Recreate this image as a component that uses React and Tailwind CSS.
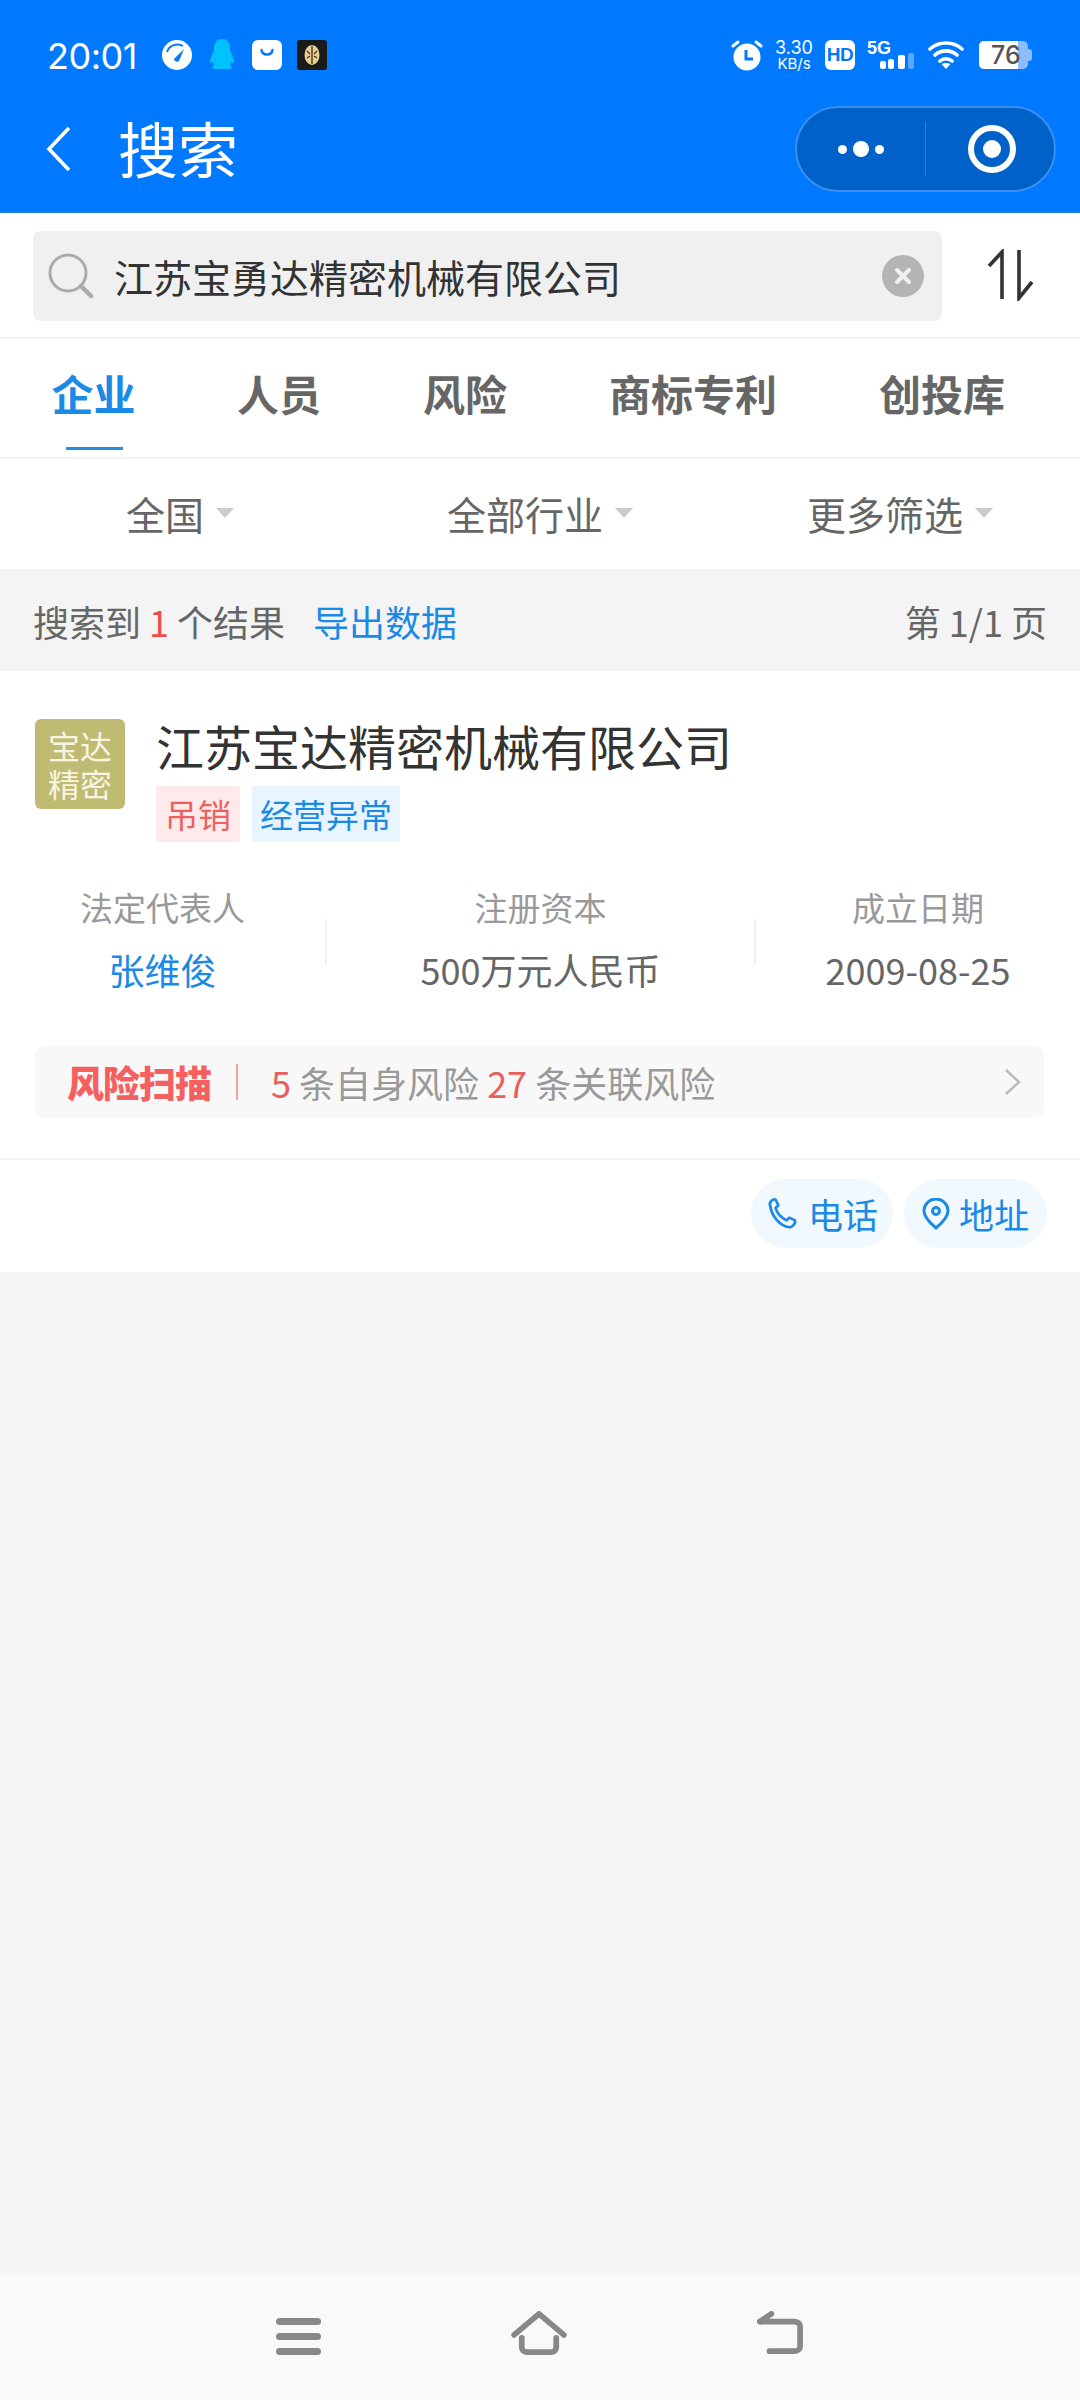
const cjk = "font-['Noto_Sans_CJK_SC','Noto_Sans',sans-serif]";

function StatusLeft() {
  return (
    <div className="flex items-center">
      <span className="font-['Inter',sans-serif] text-[36px] leading-none text-white w-[115px] ml-[47px] mt-[2px] tracking-[-0.5px]">20:01</span>
      <svg width="30" height="30" viewBox="0 0 30 30" className="shrink-0">
        <circle cx="15" cy="15" r="15" fill="#fff" />
        <path d="M5 12a11 11 0 0 1 16-6" fill="none" stroke="#0079fe" strokeWidth="2" />
        <path d="M12 19l10-10-5 12a3 3 0 0 1-5-2z" fill="#0079fe" />
      </svg>
      <svg width="26" height="31" viewBox="0 0 26 31" className="ml-[17px] shrink-0">
        <path d="M13 0c6 0 8 5 8 10 0 3 3 7 4 12 .4 2-1 2-3 1l-1 3c2 1 2 4 0 4H5c-2 0-2-3 0-4l-1-3c-2 1-3.400 1-3-1 1-5 4-9 4-12C5 5 7 0 13 0z" fill="#00c2ff" />
      </svg>
      <div className="ml-[17px] w-[30px] h-[30px] pt-[7px] rounded-[6px] bg-white flex justify-center shrink-0">
        <svg width="16" height="12" viewBox="0 0 16 12">
          <path d="M2.500 3c1 6 10 6 11 0" fill="none" stroke="#0079fe" strokeWidth="2.400" strokeLinecap="round" />
        </svg>
      </div>
      <div className="ml-[15px] w-[30px] h-[30px] rounded-[3px] bg-[#1c1a18] flex items-center justify-center shrink-0">
        <svg width="16" height="22" viewBox="0 0 16 22">
          <ellipse cx="8" cy="11" rx="7.500" ry="10" fill="#e8cf95" />
          <path d="M8 2v18M3 7l3 3M13 7l-3 3M3 14l3-2M13 14l-3-2" stroke="#4a3518" strokeWidth="1.400" />
        </svg>
      </div>
    </div>
  );
}

function StatusRight() {
  return (
    <div className="flex items-center mr-[48px]">
      <svg width="32" height="32" viewBox="0 0 32 32" className="shrink-0">
        <circle cx="16" cy="18" r="13.500" fill="#fff" />
        <path d="M2 7l5-4M30 7l-5-4" stroke="#fff" strokeWidth="3" strokeLinecap="round" />
        <path d="M15 11v9h7" fill="none" stroke="#0079fe" strokeWidth="3" />
      </svg>
      <div className="ml-[10px] w-[42px] flex flex-col items-center font-['Inter',sans-serif] text-white leading-none">
        <span className="text-[18px] h-[17px]">3.30</span>
        <span className="text-[15px] h-[15px]">KB/s</span>
      </div>
      <div className="ml-[10px] w-[30px] h-[30px] rounded-[6px] bg-white flex items-center justify-center font-['Liberation_Sans',sans-serif] font-bold text-[19px] tracking-[-0.5px] leading-none text-[#0079fe] shrink-0">HD</div>
      <div className="relative ml-[12px] w-[48px] h-[32px] shrink-0">
        <span className="absolute left-0 top-0 font-['Liberation_Sans',sans-serif] font-bold text-[18px] leading-none text-white">5G</span>
        <svg width="48" height="32" viewBox="0 0 48 32" className="absolute left-0 top-0">
          <rect x="13" y="22" width="6" height="8" rx="2" fill="#fff" />
          <rect x="21" y="20" width="6" height="10" rx="2" fill="#fff" />
          <rect x="31" y="16" width="7" height="14" rx="2" fill="#fff" />
          <rect x="41" y="14" width="6" height="16" rx="2" fill="#fff" opacity="0.35" />
        </svg>
      </div>
      <svg width="36" height="30" viewBox="0 0 36 30" className="ml-[13px] shrink-0">
        <path d="M2 9c9-8 23-8 32 0M7 15c6-5.500 16-5.500 22 0M12 21c3.500-3 8.500-3 12 0" fill="none" stroke="#fff" strokeWidth="3.600" strokeLinecap="round" />
        <path d="M18 29l-4.500-5c2.500-1.500 6.500-1.500 9 0z" fill="#fff" />
      </svg>
      <div className="ml-[15px] flex items-center shrink-0">
        <div className="relative w-[49px] h-[28px] rounded-[5px] bg-[#8cbcfb] overflow-hidden">
          <div className="absolute left-0 top-0 bottom-0 w-[39px] bg-white" />
          <span className="absolute left-[12px] top-[1px] font-['Inter',sans-serif] font-medium text-[25px] leading-[26px] text-[#555]">76</span>
        </div>
        <div className="w-[4px] h-[12px] rounded-r-[3px] bg-[#8cbcfb]" />
      </div>
    </div>
  );
}

function Header() {
  return (
    <div className="h-[213px] bg-[#0079fe] border-b-[2px] border-[#1a7ad6] flex flex-col shrink-0">
      <div className="h-[39px]" />
      <div className="h-[31px] flex items-center justify-between">
        <StatusLeft />
        <StatusRight />
      </div>
      <div className="flex items-center justify-between mt-[36px]">
        <div className="flex items-center">
          <svg width="28" height="46" viewBox="0 0 28 46" className="ml-[45px]">
            <path d="M24 2L4 23l20 21" fill="none" stroke="#fff" strokeWidth="3.600" />
          </svg>
          <span className={`${cjk} ml-[45px] -mt-[4px] text-[60px] leading-[80px] text-white`}>搜索</span>
        </div>
        <div className="w-[261px] h-[86px] mr-[24px] rounded-full bg-[#0062c8] border-2 border-[#3c8df0] flex items-center">
          <div className="w-[128px] flex items-center justify-center gap-[6px]">
            <span className="w-[9px] h-[9px] rounded-full bg-white" />
            <span className="w-[16px] h-[16px] rounded-full bg-white" />
            <span className="w-[9px] h-[9px] rounded-full bg-white" />
          </div>
          <div className="w-[1px] h-[54px] bg-[#2a7fe0]" />
          <div className="flex-1 flex items-center justify-center pl-[4px]">
            <div className="w-[48px] h-[48px] rounded-full border-[6px] border-white flex items-center justify-center">
              <span className="w-[18px] h-[18px] rounded-full bg-white" />
            </div>
          </div>
        </div>
      </div>
    </div>
  );
}

function SearchRow() {
  return (
    <div className="h-[126px] bg-white border-b-[2px] border-[#f2f2f2] flex items-center pl-[33px] shrink-0">
      <div className="w-[909px] h-[90px] mt-[2px] rounded-[8px] bg-[#f0f0f0] flex items-center">
        <svg width="48" height="46" viewBox="0 0 48 46" className="ml-[14px] shrink-0">
          <circle cx="21" cy="20" r="18" fill="none" stroke="#aaa" strokeWidth="3" />
          <path d="M34 33l10 10" stroke="#aaa" strokeWidth="4.500" strokeLinecap="round" />
        </svg>
        <span className={`${cjk} ml-[19px] text-[39px] leading-none text-[#333] flex-1`}>江苏宝勇达精密机械有限公司</span>
        <div className="w-[42px] h-[42px] rounded-full bg-[#b4b4b4] flex items-center justify-center mr-[18px] shrink-0">
          <svg width="20" height="20" viewBox="0 0 20 20">
            <path d="M4 4l12 12M16 4L4 16" stroke="#f0f0f0" strokeWidth="4" strokeLinecap="round" />
          </svg>
        </div>
      </div>
      <svg width="50" height="52" viewBox="0 0 50 52" className="ml-[45px] shrink-0">
        <path d="M15 50V3L2 17M32 1v48l13-16" fill="none" stroke="#333" strokeWidth="3.600" />
      </svg>
    </div>
  );
}

function Tabs() {
  const tabs = [
    { t: "企业", w: "w-[187px]", on: true },
    { t: "人员", w: "w-[184px]" },
    { t: "风险", w: "w-[188px]" },
    { t: "商标专利", w: "w-[268px]" },
    { t: "创投库", w: "w-[230px]" },
  ];
  return (
    <div className="h-[120px] bg-white border-b-[2px] border-[#f2f2f2] flex shrink-0">
      {tabs.map((x) => (
        <div key={x.t} className={`${x.w} relative flex justify-center pt-[19px]`}>
          <span className={`${cjk} text-[42px] leading-[70px] font-bold ${x.on ? "text-[#1a8ae6]" : "text-[#666]"}`}>{x.t}</span>
          {x.on && <div className="absolute bottom-[7px] left-[66px] w-[57px] h-[3px] bg-[#2a8cdc]" />}
        </div>
      ))}
    </div>
  );
}

function Filters() {
  const items = ["全国", "全部行业", "更多筛选"];
  return (
    <div className="h-[110px] pb-[2px] bg-white grid grid-cols-3 items-center shrink-0">
      {items.map((x) => (
        <div key={x} className="flex items-center justify-center gap-[12px]">
          <span className={`${cjk} text-[39px] leading-none text-[#666]`}>{x}</span>
          <span className="w-0 h-0 border-x-[9px] border-x-transparent border-t-[10px] border-t-[#ccc]" />
        </div>
      ))}
    </div>
  );
}

function ResultBar() {
  return (
    <div className={`${cjk} h-[102px] pt-[2px] flex items-center justify-between px-[33px] text-[36px] text-[#666] shrink-0`}>
      <div className="flex items-center">
        <span>搜索到</span>
        <span className="text-[#ef4b4b] mx-[8px]">1</span>
        <span>个结果</span>
        <span className="text-[#1a8ae6] ml-[28px]">导出数据</span>
      </div>
      <span>第 1/1 页</span>
    </div>
  );
}

function Info({ label, value, color, w }) {
  return (
    <div className={`${w} flex flex-col items-center`}>
      <span className="text-[33px] leading-[46px] text-[#999]">{label}</span>
      <span className={`text-[36px] leading-[46px] mt-[16px] ${color}`}>{value}</span>
    </div>
  );
}

function PillButton({ icon, text, w }) {
  return (
    <div className={`${w} h-[69px] rounded-full bg-[#f1f8fe] flex items-center justify-center gap-[9px]`}>
      {icon}
      <span className={`${cjk} text-[35px] leading-none text-[#1a8ae6]`}>{text}</span>
    </div>
  );
}

function Card() {
  return (
    <div className={`${cjk} bg-white h-[601px] flex flex-col shrink-0`}>
      <div className="flex mt-[48px] ml-[35px]">
        <div className="w-[90px] h-[90px] rounded-[6px] bg-[#c0bb72] flex items-center justify-center text-center text-[32px] leading-[38px] text-[#f7f5e2] shrink-0">
          <span>宝达<br />精密</span>
        </div>
        <div className="ml-[31px] -mt-[1px]">
          <div className="text-[48px] leading-[54px] text-[#333]">江苏宝达精密机械有限公司</div>
          <div className="flex gap-[12px] mt-[14px]">
            <span className="h-[56px] px-[9px] bg-[#feeaea] rounded-[2px] flex items-center text-[33px] leading-none text-[#ee5f62]">吊销</span>
            <span className="h-[56px] px-[8px] bg-[#e8f4fe] rounded-[2px] flex items-center text-[33px] leading-none text-[#1a8ae6]">经营异常</span>
          </div>
        </div>
      </div>
      <div className="flex items-center mt-[42px]">
        <Info label="法定代表人" value="张维俊" color="text-[#1a8ae6]" w="w-[325px]" />
        <div className="w-[2px] h-[45px] mt-[6px] bg-[#f0f0f0]" />
        <Info label="注册资本" value="500万元人民币" color="text-[#666]" w="w-[427px]" />
        <div className="w-[2px] h-[45px] mt-[6px] bg-[#f0f0f0]" />
        <Info label="成立日期" value="2009-08-25" color="text-[#666]" w="w-[324px]" />
      </div>
      <div className="mx-[35px] mt-[54px] w-[1009px] h-[72px] rounded-[10px] bg-[#f8f8f8] flex items-center shrink-0">
        <span className="ml-[32px] text-[37px] leading-none font-black tracking-[-1px] text-[#f4605f] w-[146px]">风险扫描</span>
        <div className="w-[2px] h-[36px] bg-[#f4a09f] ml-[23px]" />
        <span className="ml-[33px] text-[36px] leading-none text-[#999]">
          <span className="text-[#ec5d5d]">5</span> 条自身风险 <span className="text-[#ec5d5d]">27</span> 条关联风险
        </span>
        <svg width="20" height="30" viewBox="0 0 20 30" className="ml-auto mr-[21px]">
          <path d="M3 3l13 12L3 27" fill="none" stroke="#bbb" strokeWidth="2.500" />
        </svg>
      </div>
      <div className="h-[2px] bg-[#f2f2f2] mt-[40px]" />
      <div className="flex justify-end gap-[11px] mt-[19px] mr-[33px]">
        <PillButton
          w="w-[142px]"
          text="电话"
          icon={
            <svg width="33" height="33" viewBox="0 0 24 24" fill="none" stroke="#1a8ae6" strokeWidth="2" strokeLinecap="round" strokeLinejoin="round">
              <path d="M3 6c-1-2 2-5 4-4l2 4-2 2c1 4 4 7 8 9l2-2 4 2c1 2-2 5-4 5C10 21 4 14 3 6z" />
            </svg>
          }
        />
        <PillButton
          w="w-[143px]"
          text="地址"
          icon={
            <svg width="28" height="32" viewBox="0 0 28 32" fill="none" stroke="#1a8ae6" strokeWidth="3">
              <path d="M14 30C8 25 2 19 2 13a12 12 0 0 1 24 0c0 6-6 12-12 17z" strokeLinejoin="round" />
              <circle cx="14" cy="13" r="3.500" />
            </svg>
          }
        />
      </div>
    </div>
  );
}

function NavBar() {
  return (
    <div className="h-[127px] mt-auto bg-[#f9f9f9] flex items-center justify-center shrink-0">
      <div className="flex items-end -mt-[7px]">
        <div className="flex flex-col gap-[8px]">
          <span className="w-[45px] h-[7px] rounded-full bg-[#888]" />
          <span className="w-[45px] h-[7px] rounded-full bg-[#888]" />
          <span className="w-[45px] h-[7px] rounded-full bg-[#888]" />
        </div>
        <svg width="58" height="44" viewBox="0 0 58 46" className="ml-[189px]">
          <path d="M3 25L29 3l26 22" fill="none" stroke="#888" strokeWidth="6" strokeLinecap="round" strokeLinejoin="round" />
          <path d="M11 28v10c0 3 2 5 5 5h26c3 0 5-2 5-5V28" fill="none" stroke="#888" strokeWidth="6" strokeLinecap="round" />
        </svg>
        <svg width="48" height="44" viewBox="0 0 48 46" className="ml-[188px]">
          <path d="M3 11h36c3 0 6 2 6 5v21c0 3-3 5-6 5H13" fill="none" stroke="#888" strokeWidth="6" strokeLinecap="round" />
          <path d="M3 11l12-8" fill="none" stroke="#888" strokeWidth="6" strokeLinecap="round" />
        </svg>
      </div>
    </div>
  );
}

export default function App() {
  return (
    <div className="w-[1080px] h-[2400px] bg-[#f4f4f4] flex flex-col overflow-hidden">
      <Header />
      <SearchRow />
      <Tabs />
      <Filters />
      <ResultBar />
      <Card />
      <NavBar />
    </div>
  );
}
